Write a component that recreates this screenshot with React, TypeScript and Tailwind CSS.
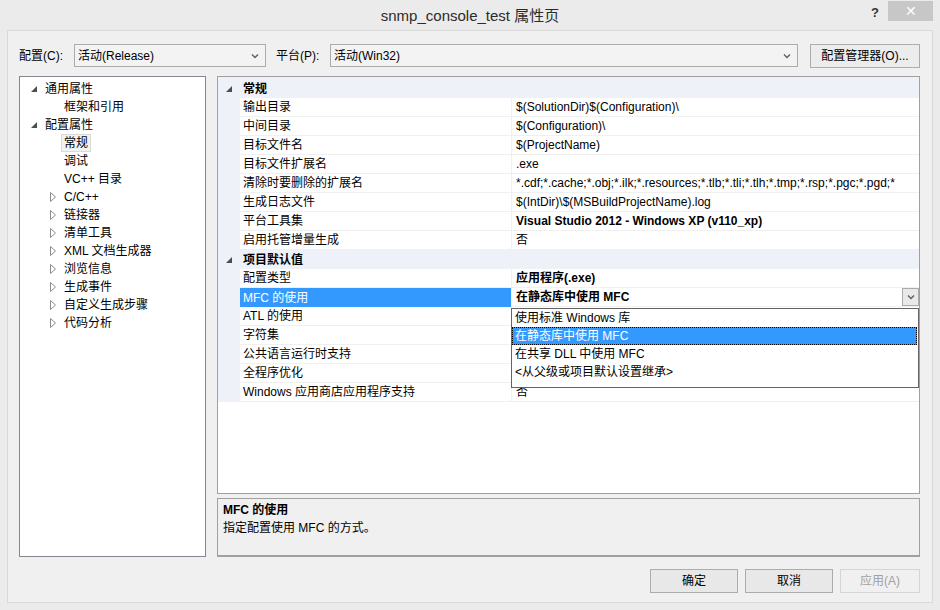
import { ReactNode } from 'react'

type TreeItem = { lvl: 0 | 1; exp?: 'open' | 'closed'; text: string; sel?: boolean }

const tree: TreeItem[] = [
  { lvl: 0, exp: 'open', text: '通用属性' },
  { lvl: 1, text: '框架和引用' },
  { lvl: 0, exp: 'open', text: '配置属性' },
  { lvl: 1, text: '常规', sel: true },
  { lvl: 1, text: '调试' },
  { lvl: 1, text: 'VC++ 目录' },
  { lvl: 1, exp: 'closed', text: 'C/C++' },
  { lvl: 1, exp: 'closed', text: '链接器' },
  { lvl: 1, exp: 'closed', text: '清单工具' },
  { lvl: 1, exp: 'closed', text: 'XML 文档生成器' },
  { lvl: 1, exp: 'closed', text: '浏览信息' },
  { lvl: 1, exp: 'closed', text: '生成事件' },
  { lvl: 1, exp: 'closed', text: '自定义生成步骤' },
  { lvl: 1, exp: 'closed', text: '代码分析' },
]

type Prop = { name: string; value: string; bold?: boolean }

const general: Prop[] = [
  { name: '输出目录', value: '$(SolutionDir)$(Configuration)\\' },
  { name: '中间目录', value: '$(Configuration)\\' },
  { name: '目标文件名', value: '$(ProjectName)' },
  { name: '目标文件扩展名', value: '.exe' },
  { name: '清除时要删除的扩展名', value: '*.cdf;*.cache;*.obj;*.ilk;*.resources;*.tlb;*.tli;*.tlh;*.tmp;*.rsp;*.pgc;*.pgd;*' },
  { name: '生成日志文件', value: '$(IntDir)\\$(MSBuildProjectName).log' },
  { name: '平台工具集', value: 'Visual Studio 2012 - Windows XP (v110_xp)', bold: true },
  { name: '启用托管增量生成', value: '否' },
]

const defaults: Prop[] = [
  { name: '配置类型', value: '应用程序(.exe)', bold: true },
  { name: 'MFC 的使用', value: '在静态库中使用 MFC', bold: true },
  { name: 'ATL 的使用', value: '' },
  { name: '字符集', value: '' },
  { name: '公共语言运行时支持', value: '' },
  { name: '全程序优化', value: '' },
  { name: 'Windows 应用商店应用程序支持', value: '否' },
]

const options = ['使用标准 Windows 库', '在静态库中使用 MFC', '在共享 DLL 中使用 MFC', '<从父级或项目默认设置继承>']

function Chevron() {
  return (
    <svg width="8" height="6" viewBox="0 0 8 6">
      <polyline points="1,1.5 4,4.5 7,1.5" fill="none" stroke="#606060" strokeWidth="1.4" />
    </svg>
  )
}

function OpenArrow() {
  return (
    <svg width="6" height="6" viewBox="0 0 6 6">
      <polygon points="6,0 6,6 0,6" fill="#4d4d4d" />
    </svg>
  )
}

function ClosedArrow() {
  return (
    <svg width="7" height="10" viewBox="0 0 7 10">
      <polygon points="0.5,0.5 5.5,5 0.5,9.5" fill="none" stroke="#8c8c8c" strokeWidth="1" />
    </svg>
  )
}

function Combo({ width, children }: { width: string; children: ReactNode }) {
  return (
    <div className={`${width} h-[23px] border border-[#acacac] bg-[#f3f3f3] flex items-center pl-[3px] pr-[6px]`}>
      <span className="flex-1">{children}</span>
      <Chevron />
    </div>
  )
}

function Category({ title, first }: { title: string; first?: boolean }) {
  return (
    <div className={first ? 'flex h-[21px] pt-[2px] items-center bg-[#eef2f8]' : 'flex h-[19px] items-center bg-[#eef2f8]'}>
      <div className="w-[22px] flex justify-center">
        <OpenArrow />
      </div>
      <span className="pl-[3px] font-bold">{title}</span>
    </div>
  )
}

function Row({ p, selected, children }: { p: Prop; selected?: boolean; children?: ReactNode }) {
  return (
    <div className="relative flex h-[19px]">
      <div className="w-[22px] shrink-0 bg-[#eef2f8]" />
      <div
        className={
          selected
            ? 'w-[271px] shrink-0 flex items-center pl-[3px] bg-[#3399ff] text-white'
            : 'w-[271px] shrink-0 flex items-center pl-[3px] border-b border-[#f0f0f0]'
        }
      >
        {p.name}
      </div>
      <div className="flex-1 min-w-0 flex items-center border-l border-b border-[#f0f0f0] pl-[4px] whitespace-nowrap overflow-hidden">
        <span className={p.bold ? 'flex-1 font-bold' : 'flex-1'}>{p.value}</span>
        {selected && (
          <div className="w-[17px] h-[18px] shrink-0 border border-[#acacac] bg-[#e9e9e9] flex items-center justify-center">
            <Chevron />
          </div>
        )}
      </div>
      {children}
    </div>
  )
}

export default function App() {
  return (
    <div className="w-[940px] h-[610px] bg-[#ebebeb] font-['Liberation_Sans','Noto_Sans_CJK_SC',sans-serif] text-[12px] text-black flex flex-col px-[7px]">
      {/* Title bar */}
      <div className="h-[30px] flex items-start">
        <div className="w-[80px]" />
        <div className="flex-1 text-center text-[15px] text-[#2b2b2b] pt-[5px]">snmp_console_test 属性页</div>
        <div className="w-[80px] flex justify-end items-start pt-[1px]">
          <span className="font-bold text-[13px] text-[#333] mr-[9px] mt-[2px]">?</span>
          <div className="w-[45px] h-[20px] bg-[#c7c7c7] flex items-center justify-center text-white text-[14px] leading-none">✕</div>
        </div>
      </div>

      {/* Dialog frame */}
      <div className="h-[573px] border border-[#d9d9d9] bg-[#f0f0f0] flex flex-col pl-[11px] pr-[12px] pt-[13px]">
        <div className="flex items-center h-[23px]">
          <span className="w-[55px]">配置(C):</span>
          <Combo width="w-[192px]">活动(Release)</Combo>
          <span className="ml-[10px] w-[54px]">平台(P):</span>
          <Combo width="w-[468px]">活动(Win32)</Combo>
          <div className="ml-[12px] w-[110px] h-[24px] border border-[#acacac] bg-[#ececec] flex items-center justify-center">
            配置管理器(O)...
          </div>
        </div>

        <div className="flex mt-[9px] gap-[11px]">
          {/* Tree */}
          <div className="w-[187px] h-[481px] border border-[#828790] bg-white pt-[3px]">
            {tree.map(t => (
              <div key={t.text} className={t.lvl === 0 ? 'flex items-center h-[18px] pl-[9px]' : 'flex items-center h-[18px] pl-[28px]'}>
                <div className="w-[16px] flex items-center justify-start pl-[2px]">
                  {t.exp === 'open' && <OpenArrow />}
                  {t.exp === 'closed' && <ClosedArrow />}
                </div>
                <span
                  className={
                    t.sel
                      ? '-ml-[3px] px-[2px] leading-[16px] border border-[#d9d9d9] bg-[#f2f2f2]'
                      : 'leading-[16px]'
                  }
                >
                  {t.text}
                </span>
              </div>
            ))}
          </div>

          {/* Right column */}
          <div className="flex flex-col w-[703px]">
            <div className="h-[418px] border border-[#a0a0a0] bg-white overflow-hidden">
              <Category title="常规" first />
              {general.map(p => (
                <Row key={p.name} p={p} />
              ))}
              <Category title="项目默认值" />
              {defaults.map(p =>
                p.name === 'MFC 的使用' ? (
                  <Row key={p.name} p={p} selected>
                    <div className="absolute left-[293px] top-[20px] w-[408px] h-[80px] border border-[#646464] bg-white z-10">
                      {options.map((o, i) => (
                        <div
                          key={o}
                          className={
                            i === 1
                              ? 'h-[18px] flex items-center pl-[2px] bg-[#3399ff] text-white border border-dotted border-black mr-[1px]'
                              : 'h-[18px] flex items-center pl-[3px]'
                          }
                        >
                          {o}
                        </div>
                      ))}
                    </div>
                  </Row>
                ) : (
                  <Row key={p.name} p={p} />
                )
              )}
            </div>

            <div className="mt-[4px] h-[59px] border border-[#a0a0a0] border-b-2 bg-[#f0f0f0] px-[5px] pt-[2px]">
              <div className="font-bold leading-[18px]">MFC 的使用</div>
              <div className="leading-[18px]">指定配置使用 MFC 的方式。</div>
            </div>
          </div>
        </div>

        {/* Buttons */}
        <div className="flex justify-end gap-[7px] mt-[12px]">
          <div className="w-[88px] h-[24px] border border-[#acacac] bg-[#e8e8e8] flex items-center justify-center">确定</div>
          <div className="w-[88px] h-[24px] border border-[#acacac] bg-[#e8e8e8] flex items-center justify-center">取消</div>
          <div className="w-[80px] h-[24px] border border-[#d5d5d5] bg-[#f0f0f0] text-[#a0a0a0] flex items-center justify-center">应用(A)</div>
        </div>
      </div>
    </div>
  )
}
